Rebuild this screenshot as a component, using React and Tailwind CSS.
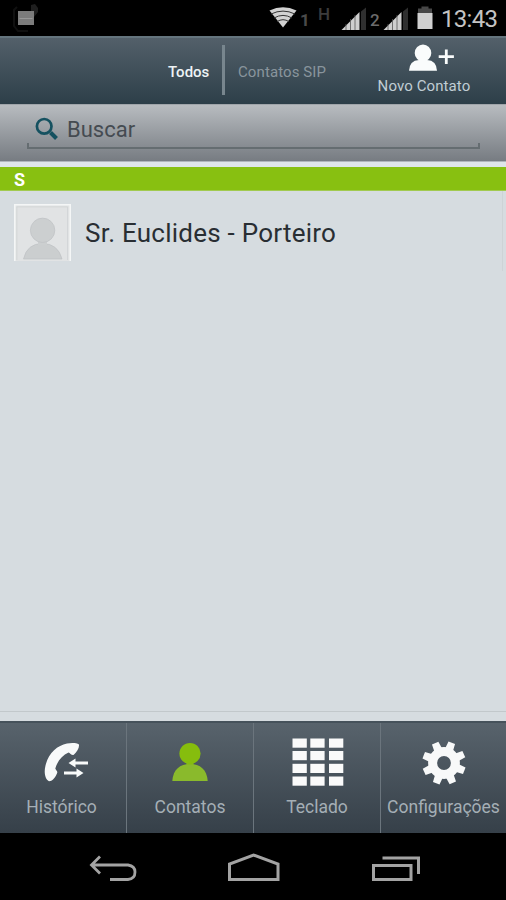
import { useState } from 'react';

function WifiIcon() {
    return (
        <svg className="w-[28px] h-[21px]" viewBox="0 0 28 21">
            <path d="M0.5 3.5 Q14 -3 27.5 3.5 L14 20.5 Z" fill="#d2d2d2" />
            <g fill="none" stroke="#333" strokeWidth="1">
                <path d="M2 7 Q14 1.2 26 7" />
                <path d="M5 11 Q14 5.8 23 11" />
                <path d="M8 14.6 Q14 10.8 20 14.6" />
            </g>
        </svg>
    );
}

function SignalIcon() {
    return (
        <svg className="w-[26px] h-[24px]" viewBox="0 0 26 24">
            <path d="M0.5 23 L18.5 5 V23 Z" fill="#cfcfcf" />
            <path d="M5 17 V23 M9.5 12 V23 M14 8 V23" stroke="#555" strokeWidth="0.8" />
            <path d="M20 4.5 L25 0.5 V23 H20 Z" fill="#2f2f2f" />
        </svg>
    );
}

function BatteryIcon() {
    return (
        <svg className="w-[16px] h-[24px]" viewBox="0 0 16 24">
            <path d="M4.5 0.5 H11.5 V2.5 H15 V8 H1 V2.5 H4.5 Z" fill="#474747" />
            <rect x="0.5" y="7" width="15" height="16" fill="#d0d0d0" />
        </svg>
    );
}

function NewContactIcon() {
    return (
        <svg className="w-[48px] h-[28px]" viewBox="0 0 48 28" fill="#fafcfc">
            <ellipse cx="16" cy="9" rx="8.3" ry="8.6" />
            <path d="M2 26.7 Q2.5 16.5 12 16 H20 Q29.5 16.5 30 26.7 Z" />
            <path d="M37.9 5.5 H40.7 V11.3 H46.9 V14 H40.7 V20 H37.9 V14 H31.7 V11.3 H37.9 Z" />
        </svg>
    );
}

function SearchIcon() {
    return (
        <svg className="w-[24px] h-[24px]" viewBox="0 0 24 24" fill="none" stroke="#155160">
            <circle cx="9.2" cy="9.3" r="7.3" strokeWidth="2.7" />
            <path d="M15.5 15.5 L21.5 21.5" strokeWidth="4" />
        </svg>
    );
}

function Avatar() {
    return (
        <svg className="w-[57px] h-[57px]" viewBox="0 0 57 57">
            <rect width="57" height="57" fill="#e1e3e4" />
            <path d="M0.8 57 V0.8 H56.2 V57" fill="none" stroke="#f4f6f6" strokeWidth="1.6" />
            <path d="M2.8 56 V2.8 H53.5 V56" fill="none" stroke="#cfd3d4" strokeWidth="0.8" />
            <path d="M9.5 55 Q13 39.5 28.5 39.5 Q44 39.5 48 55 Z" fill="#cbcecf" stroke="#bec2c4" strokeWidth="0.7" />
            <path d="M24 37 H33 V41 H24 Z" fill="#cccfd0" />
            <circle cx="28.6" cy="26.3" r="12.2" fill="#cccfd0" stroke="#bec2c4" strokeWidth="0.7" />
        </svg>
    );
}

function HistoryIcon() {
    return (
        <svg className="w-[46px] h-[50px]" viewBox="0 0 46 50" fill="#f8fafa">
            <path d="M6 43.2 C2 41.5 0.8 34 2.4 28 C5 16 14 7.5 24 5.6 C29 4.7 33.5 5 36 6.5 C36.5 9.5 34 14 30.5 17 C28.5 17.5 27 15 25.5 14.5 C19 17.5 14.5 23 12.3 30.5 C12.8 32 14.5 33 14.3 34.5 C13 38.5 10 43.2 6 43.2 Z" />
            <path d="M25.5 25 L32.5 20.500 V23.400 H45 V26.600 H32.500 V29.500 Z" />
            <path d="M40.500 35 L33.500 30.500 V33.400 H21 V36.600 H33.500 V39.500 Z" />
        </svg>
    );
}

function ContactIcon() {
    return (
        <svg className="w-[38px] h-[50px]" viewBox="0 0 38 50">
            <path d="M1.3 43 C2 31.500 9 26 19 26 C29 26 36 31.500 36.700 43 Z" fill="#8aba2c" />
            <path d="M15.500 23 H22.500 V27 H15.500 Z" fill="#88b91f" />
            <circle cx="19" cy="15.500" r="10.600" fill="#86bd0d" />
        </svg>
    );
}

function KeypadIcon() {
    const rows = [0.5, 13, 25.8, 38.5];
    const cols = [0.5, 18.3, 37];
    return (
        <svg className="w-[52px] h-[50px]" viewBox="0 0 52 50" fill="#fafafa">
            {rows.map((y) =>
                cols.map((x) => <rect key={`${x}-${y}`} x={x} y={y} width="14.3" height="9.2" />)
            )}
        </svg>
    );
}

function GearIcon() {
    const teeth = [21, 66, 111, 156, 201, 246, 291, 336];
    return (
        <svg className="w-[46px] h-[50px]" viewBox="0 0 46 50">
            <g fill="#f8f9f9">
                {teeth.map((a) => (
                    <path key={a} d="M18.700 13 L19.500 3.300 H26.500 L27.300 13 Z" transform={`rotate(${a} 23 25)`} />
                ))}
            </g>
            <circle cx="23" cy="25" r="11.400" fill="none" stroke="#f8f9f9" strokeWidth="9" />
        </svg>
    );
}

const tabs = [
    { id: 'historico', label: 'Histórico', icon: HistoryIcon, box: 'w-[127px] border-r', pad: 'pl-[6px]', text: 'pr-[3px]' },
    { id: 'contatos', label: 'Contatos', icon: ContactIcon, box: 'w-[127px] border-r', pad: '', text: '' },
    { id: 'teclado', label: 'Teclado', icon: KeypadIcon, box: 'w-[127px] border-r', pad: 'pl-[2px]', text: '' },
    { id: 'config', label: 'Configurações', icon: GearIcon, box: 'w-[125px]', pad: '', text: '' },
];

function StatusBar() {
    return (
        <div className="h-9 bg-black flex items-start text-[#6b6b6b]">
            <svg className="w-[40px] h-[34px] ml-[8px]" viewBox="8 0 40 34">
                <path d="M17 7 L14 10 V26 L18 31 H28" fill="none" stroke="#101010" strokeWidth="2" />
                <path d="M31 5 L35 4 L38 8 V12 L34 17 V11 H31 Z" fill="#1f1f1f" />
                <rect x="18" y="11" width="16" height="14" fill="#7c7c7c" />
                <path d="M19.500 18.500 H32.500" stroke="#989898" strokeWidth="1" />
            </svg>
            <div className="ml-[221px] mt-[7px]"><WifiIcon /></div>
            <span className="ml-[3px] mt-[10px] w-[18px] text-[17px] font-bold leading-[20px] text-[#4a4a4a]">1</span>
            <span className="w-[23px] text-[17px] font-medium leading-[20px] mt-[4px] text-[#3c3c3c]">H</span>
            <div className="mt-[7px]"><SignalIcon /></div>
            <span className="ml-[3px] mt-[10px] w-[13px] text-[17px] font-medium leading-[20px]">2</span>
            <div className="mt-[7px]"><SignalIcon /></div>
            <div className="ml-[8px] mt-[6px]"><BatteryIcon /></div>
            <span className="ml-[8px] mt-[5px] text-[24px] leading-[28px] text-[#c4c4c4] whitespace-nowrap tracking-[-0.7px]">13:43</span>
        </div>
    );
}

export default function App() {
    const [active, setActive] = useState('contatos');

    return (
        <div className="w-[506px] h-[900px] flex flex-col overflow-hidden bg-[#d6dce0] font-['Roboto','Liberation_Sans',sans-serif]">
            <StatusBar />

            {/* Header */}
            <header className="h-[68px] flex border-t-2 border-[#64747d] bg-gradient-to-b from-[#53606a] to-[#2d3f49]">
                <button className="ml-[168px] w-[54px] pt-[3px] text-left text-[15px] font-medium text-[#edf3f5]">Todos</button>
                <div className="w-[3px] h-[50px] mt-[7px] bg-[#78868e]"></div>
                <button className="ml-[13px] w-[90px] pt-[3px] text-left text-[15px] tracking-[0.1px] text-[#89959d] whitespace-nowrap">Contatos SIP</button>
                <button className="ml-[49px] w-[94px] pt-[6px] flex flex-col items-center justify-start text-[#c0cdd4]">
                    <div className="ml-[14px]"><NewContactIcon /></div>
                    <span className="mt-[5px] text-[15px] leading-[18px] whitespace-nowrap tracking-[0.1px]">Novo Contato</span>
                </button>
            </header>

            {/* Search */}
            <div className="h-[57px] px-[27px] pt-[12px] border-t border-[#a0a5aa] bg-gradient-to-b from-[#b8bcc0] to-[#777c82]">
                <div className="flex h-[26px] pl-[8px]">
                    <SearchIcon />
                    <span className="ml-[8px] text-[22px] leading-[26px] text-[#454b51]">Buscar</span>
                </div>
                <div className="w-[453px] h-[6px] border-b-2 border-x-2 border-[#656d71]"></div>
            </div>

            <div className="h-[6px] bg-[#dfe5e8] border-t border-[#b0b6ba]"></div>
            <div className="h-[24px] pl-[14px] bg-[#88c011] border-b border-[#a2ca50] text-white font-bold text-[18px] leading-[25px]">S</div>

            {/* Contact list */}
            <main className="flex-1 pt-[13px]">
                <div className="flex pl-[14px]">
                    <Avatar />
                    <span className="ml-[14px] text-[26px] leading-[59px] tracking-[0.24px] text-[#292e33] whitespace-nowrap">Sr. Euclides - Porteiro</span>
                    <div className="ml-auto mr-[3px] -mt-[13px] w-px h-[80px] bg-[#cdd3d6]"></div>
                </div>
            </main>
            <div className="h-[10px] border-t border-[#c2c8cb]"></div>

            {/* Bottom tabs */}
            <nav className="h-[112px] flex border-t-2 border-[#46525b] bg-gradient-to-b from-[#58636c] to-[#364049]">
                {tabs.map((tab) => {
                    const Icon = tab.icon;
                    return (
                        <button
                            key={tab.id}
                            onClick={() => setActive(tab.id)}
                            aria-pressed={active === tab.id}
                            className={`${tab.box} border-[#6b757d] pt-[15px] flex flex-col items-center`}
                        >
                            <span className={tab.pad}><Icon /></span>
                            <span className={`${tab.text} mt-[8px] text-[17.5px] leading-[22px] text-[#a5afb6] whitespace-nowrap`}>{tab.label}</span>
                        </button>
                    );
                })}
            </nav>

            {/* System navigation */}
            <footer className="h-[67px] bg-black flex items-start pt-[18px]">
                <svg className="w-[48px] h-[34px] ml-[89px]" viewBox="0 0 48 34" fill="none" stroke="#a3a3a3" strokeWidth="2.800">
                    <path d="M11 5.500 L2.500 14 L11 22.500 M2.500 14 H39 Q46 15 46 21 Q46 28 39 28.500 H21" />
                </svg>
                <svg className="w-[54px] h-[34px] ml-[90px]" viewBox="0 0 54 34" fill="none" stroke="#a3a3a3" strokeWidth="3">
                    <path d="M2.500 28.500 V13 L26.500 4 L51 13 V28.500 Z" />
                </svg>
                <svg className="w-[50px] h-[34px] ml-[90px]" viewBox="0 0 50 34" fill="none" stroke="#a3a3a3" strokeWidth="3">
                    <path d="M2.500 14.500 H40 V28.500 H2.500 Z M11.500 7 H47.500 V23" />
                </svg>
            </footer>
        </div>
    );
}
